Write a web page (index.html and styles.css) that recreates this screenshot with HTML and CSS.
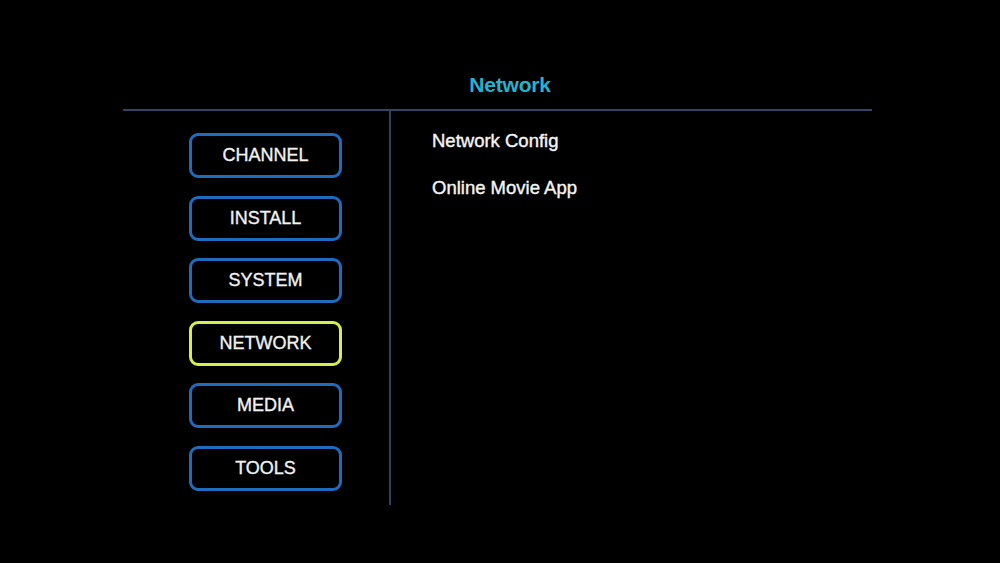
FILE: index.html
```html
<!DOCTYPE html>
<html lang="en">
<head>
  <meta charset="UTF-8">
  <meta name="viewport" content="width=device-width, initial-scale=1.0">
  <title>Network</title>
  <link rel="stylesheet" href="styles.css">
</head>
<body>
  <div class="screen">
    <!-- Page title and divider -->
    <div class="header">
      <div class="title">Network</div>
    </div>

    <div class="panel">
      <!-- Left column: main menu -->
      <div class="menu">
        <div class="menu-item">CHANNEL</div>
        <div class="menu-item">INSTALL</div>
        <div class="menu-item">SYSTEM</div>
        <div class="menu-item active">NETWORK</div>
        <div class="menu-item">MEDIA</div>
        <div class="menu-item">TOOLS</div>
      </div>

      <!-- Right column: sub menu -->
      <div class="submenu">
        <div class="sub-item">Network Config</div>
        <div class="sub-item">Online Movie App</div>
      </div>
    </div>
  </div>
</body>
</html>
```

FILE: styles.css
```css
body {
  font-family: 'Liberation Sans', Arial, sans-serif;
  background-color: #000;
  color: #f2f2f2;
  margin: 0;
  padding: 0;
  width: 1000px;
  height: 563px;
  overflow: hidden;
}

.screen {
  padding-top: 70px;
}

.header {
  width: 749px;
  margin-left: 123px;
  border-bottom: 2px solid #2f4668;
}

.title {
  text-align: center;
  padding-left: 25px;
  font-size: 21px;
  font-weight: bold;
  color: #20b4d2;
  line-height: 30px;
  padding-bottom: 9px;
  letter-spacing: -0.2px;
}

.panel {
  display: flex;
  margin-left: 123px;
}

.menu {
  width: 268px;
  height: 394px;
  border-right: 2px solid #2c4262;
  padding-top: 22px;
  padding-left: 66px;
  box-sizing: border-box;
  display: flex;
  flex-direction: column;
  gap: 17.6px;
}

.menu-item {
  width: 153px;
  height: 45px;
  box-sizing: border-box;
  border: 3px solid #1f6cbf;
  border-radius: 9px;
  display: flex;
  align-items: center;
  justify-content: center;
  font-size: 18px;
  color: #f2f2f2;
  -webkit-text-stroke: 0.35px #f2f2f2;
}

.menu-item.active {
  border-color: #d6ef4c;
}

.submenu {
  padding-left: 41px;
  padding-top: 19px;
  display: flex;
  flex-direction: column;
  gap: 25px;
}

.sub-item {
  font-size: 18.5px;
  line-height: 22px;
  color: #f4f4f4;
  -webkit-text-stroke: 0.4px #f4f4f4;
}
```
